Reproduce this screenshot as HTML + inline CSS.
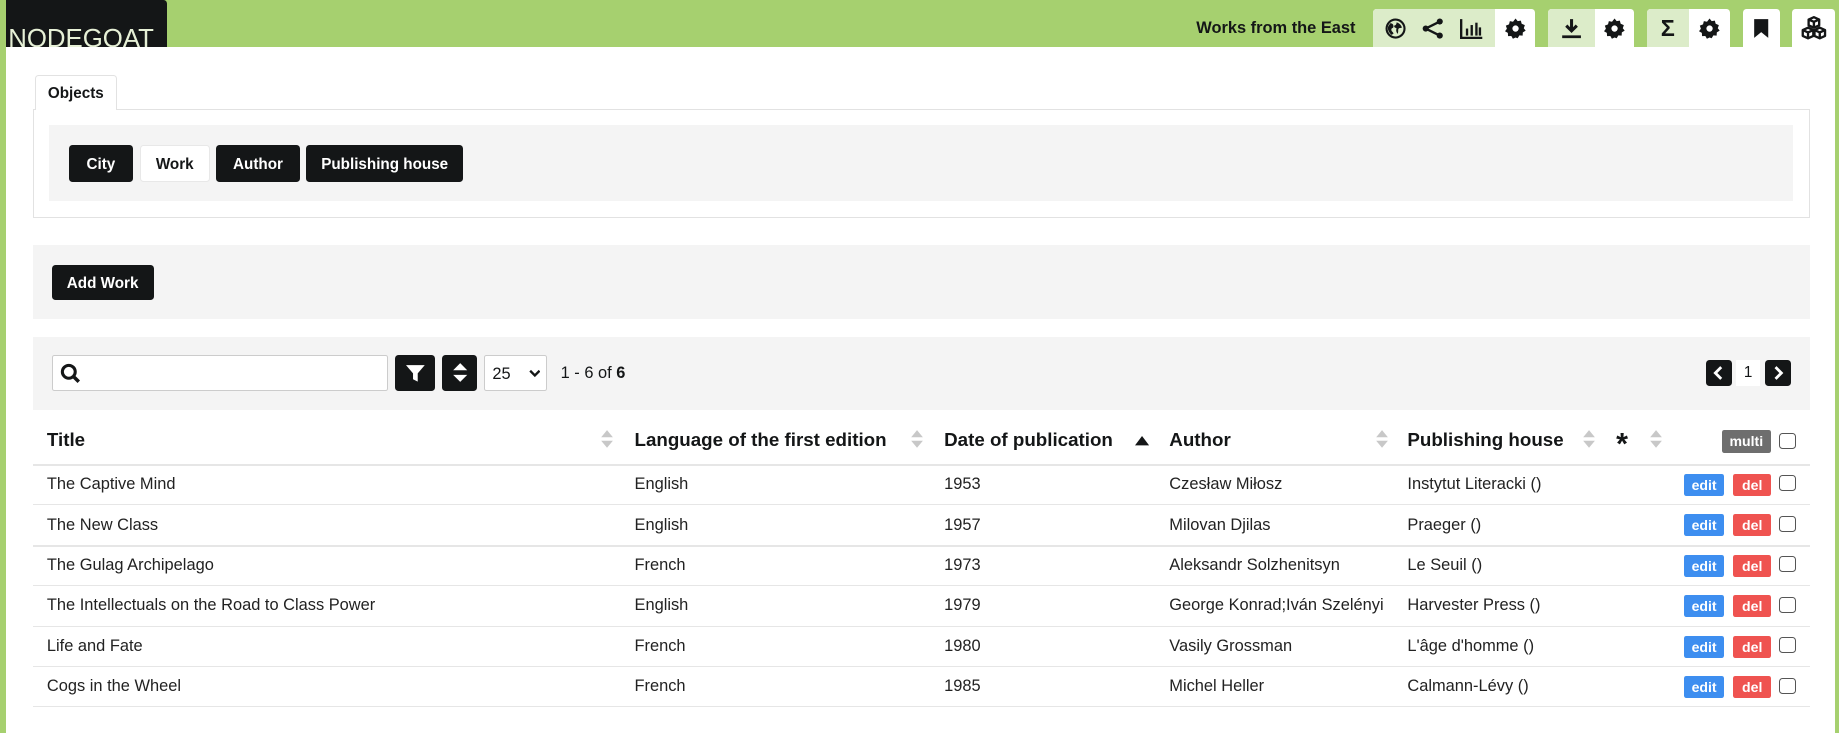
<!DOCTYPE html>
<html><head><meta charset="utf-8"><style>
*{box-sizing:border-box;margin:0;padding:0}
html,body{width:1839px;height:733px;overflow:hidden;background:#fff}
#w{zoom:1.17283;position:relative;width:1568px;height:625px;font-family:"Liberation Sans",sans-serif;color:#141617;background:#fff}
.a{position:absolute}
.top{left:0;top:0;width:1568px;height:40px;background:#a6d06f}
.lb{left:0;top:0;width:5px;height:625px;background:#a6d06f}
.rb{left:1565px;top:0;width:3px;height:625px;background:#a6d06f}
.logo{left:5px;top:0;width:137px;height:40px;background:#141617;border-top-right-radius:3px;color:#e6f0d6;font-size:22px;font-weight:normal;padding-left:2px;padding-top:21px;overflow:hidden;line-height:24px;letter-spacing:0px}
.ib{top:8px;height:32px;border-radius:3px 3px 0 0;background:#fff;display:flex;overflow:hidden}
.ib span{display:flex;align-items:center;justify-content:center;height:32px}
.lg{background:#dcecc9}
.btn{background:#141617;color:#fff;font-weight:bold;font-size:13px;border-radius:3px;display:flex;align-items:center;justify-content:center;padding-top:2px}
.gray{background:#f4f4f4}
.th{top:366px;font-size:16px;font-weight:bold}
.sa{top:366px}
.hl{left:28px;width:1515px;height:1px;background:#e6e6e6}
.td{font-size:14px;color:#222}
.ed{width:34px;height:19px;background:#3d8ef0;color:#fff;font-size:12px;font-weight:bold;border-radius:2px;text-align:center;line-height:19px}
.dl{width:32px;height:19px;background:#ef5350;color:#fff;font-size:12px;font-weight:bold;border-radius:2px;text-align:center;line-height:19px}
.cb{width:14px;height:14px;border:1.5px solid #555;border-radius:3px;background:#fff}
</style></head><body><div id="w">
<div class="a top"></div><div class="a lb"></div><div class="a rb"></div>
<div class="a logo">NODEGOAT</div>
<div class="a" style="left:1020px;top:16px;font-size:14px;font-weight:bold">Works from the East</div>
<div class="a ib" style="left:1171px;width:138px">
 <span class="lg" style="width:104px;justify-content:space-around;padding:0 4px">
  <svg width="18" height="18" viewBox="0 0 20 20"><circle cx="10" cy="10" r="8.5" fill="none" stroke="#141617" stroke-width="2"/><path d="M5 5c2 0 3 1 3 3s-2 1-2 3 2 2 2 4l-2 1c-2-2-4-5-3-8zM11 4c2 1 4 2 5 5-1 1-2 0-3 1s0 3-1 5c-1-1-2-3-1-5-1-1-3-1-2-3 1 0 2-1 2-3z" fill="#141617"/></svg>
  <svg width="20" height="18" viewBox="0 0 20 18"><circle cx="4" cy="9" r="2.6" fill="#141617"/><circle cx="16" cy="3" r="2.6" fill="#141617"/><circle cx="16" cy="15" r="2.6" fill="#141617"/><path d="M4 9L16 3M4 9l12 6" stroke="#141617" stroke-width="2"/></svg>
  <svg width="20" height="18" viewBox="0 0 20 18"><path d="M1 1v16h18" fill="none" stroke="#141617" stroke-width="2"/><rect x="5" y="9" width="2" height="6" fill="#141617"/><rect x="9" y="6" width="2" height="9" fill="#141617"/><rect x="13" y="4" width="2" height="11" fill="#141617"/><rect x="16" y="8" width="2" height="7" fill="#141617"/></svg>
 </span>
 <span style="width:34px"><svg width="18" height="18" viewBox="0 0 20 20"><path d="M10 1l2 2.5 3-.5.8 3 3 1.2-1 3 1.8 2.3-2.7 1.6-.2 3.1-3.1-.2-1.6 2.7L10 19l-2.5 1.2L6 17.5l-3.1.2-.2-3.1L0 13l1.8-2.3-1-3 3-1.2.8-3 3 .5z" fill="#141617" transform="translate(0 -.5)"/><circle cx="10" cy="10" r="3" fill="#fff"/></svg></span>
</div>
<div class="a ib" style="left:1320px;width:73px">
 <span class="lg" style="width:40px"><svg width="18" height="18" viewBox="0 0 18 18"><path d="M9 1v10M4.5 6.5L9 11l4.5-4.5" fill="none" stroke="#141617" stroke-width="2.6"/><path d="M1 16h16" stroke="#141617" stroke-width="2.4"/></svg></span>
 <span style="width:33px"><svg width="18" height="18" viewBox="0 0 20 20"><path d="M10 1l2 2.5 3-.5.8 3 3 1.2-1 3 1.8 2.3-2.7 1.6-.2 3.1-3.1-.2-1.6 2.7L10 19l-2.5 1.2L6 17.5l-3.1.2-.2-3.1L0 13l1.8-2.3-1-3 3-1.2.8-3 3 .5z" fill="#141617" transform="translate(0 -.5)"/><circle cx="10" cy="10" r="3" fill="#fff"/></svg></span>
</div>
<div class="a ib" style="left:1404px;width:71px">
 <span class="lg" style="width:36px;font-size:20px;font-weight:bold">Σ</span>
 <span style="width:35px"><svg width="18" height="18" viewBox="0 0 20 20"><path d="M10 1l2 2.5 3-.5.8 3 3 1.2-1 3 1.8 2.3-2.7 1.6-.2 3.1-3.1-.2-1.6 2.7L10 19l-2.5 1.2L6 17.5l-3.1.2-.2-3.1L0 13l1.8-2.3-1-3 3-1.2.8-3 3 .5z" fill="#141617" transform="translate(0 -.5)"/><circle cx="10" cy="10" r="3" fill="#fff"/></svg></span>
</div>
<div class="a ib" style="left:1486px;width:32px"><span style="width:32px"><svg width="14" height="18" viewBox="0 0 14 18"><path d="M1 1h12v16l-6-5-6 5z" fill="#141617"/></svg></span></div>
<div class="a ib" style="left:1528px;width:37px"><span style="width:37px"><svg width="22" height="20" viewBox="0 0 22 20" fill="none" stroke="#141617" stroke-width="2" stroke-linejoin="round"><path d="M11 1l4.5 2v5L11 10 6.5 8V3z M6.5 3L11 5l4.5-2M11 5v5"/><path d="M6 10l4.5 2v5L6 19l-4.5-2v-5z M1.5 12L6 14l4.5-2M6 14v5"/><path d="M16 10l4.5 2v5L16 19l-4.5-2v-5z M11.5 12l4.5 2 4.5-2M16 14v5"/></svg></span></div>

<div class="a" style="left:28px;top:93px;width:1515px;height:93px;border:1px solid #e2e2e2"></div>
<div class="a" style="left:30px;top:64px;width:70px;height:30px;border:1px solid #e2e2e2;border-bottom:none;border-radius:3px 3px 0 0;background:#fff;font-size:13px;font-weight:bold;padding:8px 0 0 10px">Objects</div>
<div class="a gray" style="left:42px;top:107px;width:1487px;height:64px"></div>
<div class="a btn" style="left:59px;top:124px;width:54px;height:31px">City</div>
<div class="a" style="left:119px;top:124px;width:60px;height:31px;background:#fff;border:1px solid #e8e8e8;border-radius:3px;font-size:13px;font-weight:bold;display:flex;align-items:center;justify-content:center;padding-top:2px">Work</div>
<div class="a btn" style="left:184px;top:124px;width:72px;height:31px">Author</div>
<div class="a btn" style="left:261px;top:124px;width:134px;height:31px">Publishing house</div>

<div class="a gray" style="left:28px;top:209px;width:1515px;height:63px"></div>
<div class="a btn" style="left:44px;top:226px;width:87px;height:30px">Add Work</div>

<div class="a gray" style="left:28px;top:287px;width:1515px;height:63px"></div>
<div class="a" style="left:44px;top:303px;width:287px;height:30px;background:#fff;border:1px solid #ccc;border-radius:2px"><svg style="position:absolute;left:6px;top:6px" width="18" height="18" viewBox="0 0 18 18"><circle cx="7.5" cy="7.5" r="5.5" fill="none" stroke="#141617" stroke-width="2.6"/><path d="M11.5 11.5L16 16" stroke="#141617" stroke-width="3"/></svg></div>
<div class="a btn" style="left:337px;top:303px;width:34px;height:30px;padding:0"><svg width="16" height="16" viewBox="0 0 16 16"><path d="M0 1h16l-6 7v7l-4-2V8z" fill="#fff"/></svg></div>
<div class="a btn" style="left:377px;top:303px;width:30px;height:30px;padding:0"><svg width="14" height="18" viewBox="0 0 14 18"><path d="M7 1l6 6H1zM7 17l6-6H1z" fill="#fff"/></svg></div>
<div class="a" style="left:413px;top:303px;width:53px;height:30px;background:#fff;border:1px solid #ccc;border-radius:2px;font-size:14px;padding:7px 0 0 6px">25<svg style="position:absolute;left:37px;top:11px" width="10" height="8" viewBox="0 0 10 8"><path d="M1 1.5l4 4 4-4" fill="none" stroke="#141617" stroke-width="2"/></svg></div>
<div class="a" style="left:478px;top:310px;font-size:14px">1 - 6 of <b>6</b></div>
<div class="a btn" style="left:1455px;top:307px;width:22px;height:22px;padding:0"><svg width="10" height="12" viewBox="0 0 10 12"><path d="M7 1L2 6l5 5" fill="none" stroke="#fff" stroke-width="2.4"/></svg></div>
<div class="a" style="left:1480px;top:307px;width:21px;height:22px;background:#fff;font-size:13px;text-align:center;line-height:22px">1</div>
<div class="a btn" style="left:1505px;top:307px;width:22px;height:22px;padding:0"><svg width="10" height="12" viewBox="0 0 10 12"><path d="M3 1l5 5-5 5" fill="none" stroke="#fff" stroke-width="2.4"/></svg></div>

<div class="a th" style="left:40px">Title</div>
<div class="a th" style="left:541px">Language of the first edition</div>
<div class="a th" style="left:805px">Date of publication</div>
<div class="a th" style="left:997px">Author</div>
<div class="a th" style="left:1200px">Publishing house</div>
<div class="a" style="left:1378px;top:364px;font-size:26px;font-weight:bold">*</div>
<svg class="a sa" style="left:512px" width="12" height="17" viewBox="0 0 12 17"><path d="M6 1l5 6H1zM6 16l5-6H1z" fill="#c8c8c8"/></svg>
<svg class="a sa" style="left:776px" width="12" height="17" viewBox="0 0 12 17"><path d="M6 1l5 6H1zM6 16l5-6H1z" fill="#c8c8c8"/></svg>
<svg class="a" style="left:968px;top:372px" width="12" height="8" viewBox="0 0 12 8"><path d="M6 0l6 8H0z" fill="#141617"/></svg>
<svg class="a sa" style="left:1172px" width="12" height="17" viewBox="0 0 12 17"><path d="M6 1l5 6H1zM6 16l5-6H1z" fill="#c8c8c8"/></svg>
<svg class="a sa" style="left:1349px" width="12" height="17" viewBox="0 0 12 17"><path d="M6 1l5 6H1zM6 16l5-6H1z" fill="#c8c8c8"/></svg>
<svg class="a sa" style="left:1406px" width="12" height="17" viewBox="0 0 12 17"><path d="M6 1l5 6H1zM6 16l5-6H1z" fill="#c8c8c8"/></svg>
<div class="a" style="left:1468px;top:367px;width:42px;height:19px;background:#6e6e6e;color:#fff;font-size:12px;font-weight:bold;border-radius:2px;text-align:center;line-height:19px">multi</div>
<div class="a cb" style="left:1517px;top:369px"></div>

<div class="a hl" style="top:396px"></div>
<div class="a hl" style="top:430px"></div>
<div class="a hl" style="top:465px"></div>
<div class="a hl" style="top:499px"></div>
<div class="a hl" style="top:534px"></div>
<div class="a hl" style="top:568px"></div>
<div class="a hl" style="top:602px"></div>

<div class="a td" style="left:40px;top:405px">The Captive Mind</div><div class="a td" style="left:541px;top:405px">English</div><div class="a td" style="left:805px;top:405px">1953</div><div class="a td" style="left:997px;top:405px">Czesław Miłosz</div><div class="a td" style="left:1200px;top:405px">Instytut Literacki ()</div>
<div class="a td" style="left:40px;top:440px">The New Class</div><div class="a td" style="left:541px;top:440px">English</div><div class="a td" style="left:805px;top:440px">1957</div><div class="a td" style="left:997px;top:440px">Milovan Djilas</div><div class="a td" style="left:1200px;top:440px">Praeger ()</div>
<div class="a td" style="left:40px;top:474px">The Gulag Archipelago</div><div class="a td" style="left:541px;top:474px">French</div><div class="a td" style="left:805px;top:474px">1973</div><div class="a td" style="left:997px;top:474px">Aleksandr Solzhenitsyn</div><div class="a td" style="left:1200px;top:474px">Le Seuil ()</div>
<div class="a td" style="left:40px;top:508px">The Intellectuals on the Road to Class Power</div><div class="a td" style="left:541px;top:508px">English</div><div class="a td" style="left:805px;top:508px">1979</div><div class="a td" style="left:997px;top:508px">George Konrad;Iván Szelényi</div><div class="a td" style="left:1200px;top:508px">Harvester Press ()</div>
<div class="a td" style="left:40px;top:543px">Life and Fate</div><div class="a td" style="left:541px;top:543px">French</div><div class="a td" style="left:805px;top:543px">1980</div><div class="a td" style="left:997px;top:543px">Vasily Grossman</div><div class="a td" style="left:1200px;top:543px">L'âge d'homme ()</div>
<div class="a td" style="left:40px;top:577px">Cogs in the Wheel</div><div class="a td" style="left:541px;top:577px">French</div><div class="a td" style="left:805px;top:577px">1985</div><div class="a td" style="left:997px;top:577px">Michel Heller</div><div class="a td" style="left:1200px;top:577px">Calmann-Lévy ()</div>

<div class="a ed" style="left:1436px;top:404px">edit</div><div class="a dl" style="left:1478px;top:404px">del</div><div class="a cb" style="left:1517px;top:405px"></div>
<div class="a ed" style="left:1436px;top:438px">edit</div><div class="a dl" style="left:1478px;top:438px">del</div><div class="a cb" style="left:1517px;top:440px"></div>
<div class="a ed" style="left:1436px;top:473px">edit</div><div class="a dl" style="left:1478px;top:473px">del</div><div class="a cb" style="left:1517px;top:474px"></div>
<div class="a ed" style="left:1436px;top:507px">edit</div><div class="a dl" style="left:1478px;top:507px">del</div><div class="a cb" style="left:1517px;top:509px"></div>
<div class="a ed" style="left:1436px;top:542px">edit</div><div class="a dl" style="left:1478px;top:542px">del</div><div class="a cb" style="left:1517px;top:543px"></div>
<div class="a ed" style="left:1436px;top:576px">edit</div><div class="a dl" style="left:1478px;top:576px">del</div><div class="a cb" style="left:1517px;top:578px"></div>
</div></body></html>
